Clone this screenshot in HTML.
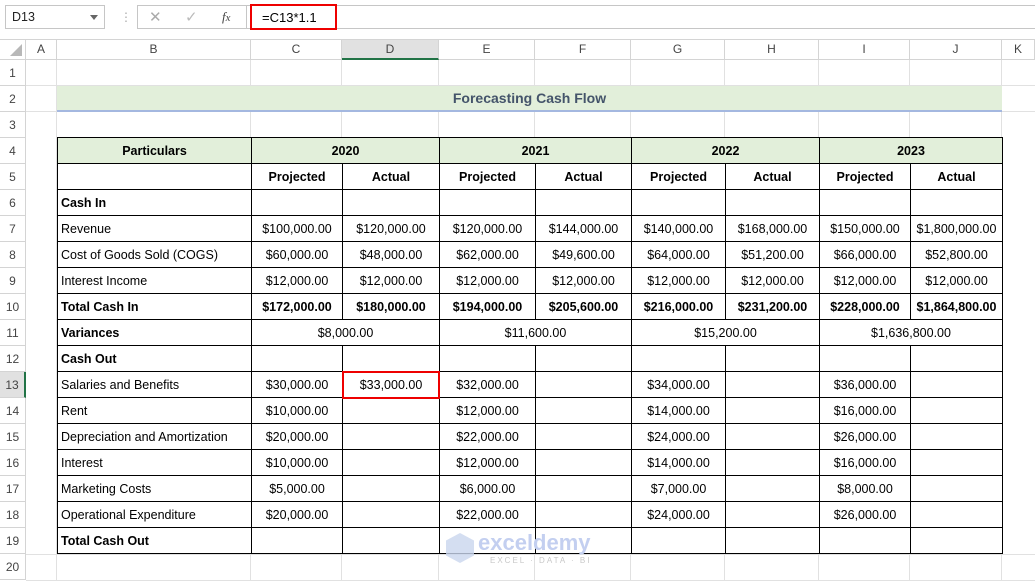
<!DOCTYPE html>
<html><head><meta charset="utf-8"><style>
*{margin:0;padding:0;box-sizing:border-box}
body{width:1035px;height:581px;overflow:hidden;background:#fff;font-family:"Liberation Sans",Arial,sans-serif;position:relative}
.abs{position:absolute}
.top{left:0;top:0;width:1035px;height:40px;background:#fff;border-bottom:1px solid #d4d4d4}
.nb{left:5px;top:5px;width:100px;height:24px;border:1px solid #c6c6c6;font-size:12.5px;color:#222;padding:4px 6px}
.fx{left:137px;top:5px;width:110px;height:24px;border:1px solid #c6c6c6}
.fi{left:247px;top:5px;width:790px;height:24px;border:1px solid #c6c6c6;border-left:none}
.hdr{top:40px;height:20px;background:#fff;border-right:1px solid #d4d4d4;border-bottom:1px solid #d4d4d4;font-size:12px;color:#444;text-align:center;line-height:19px}
.rh{left:0;width:26px;height:26px;border-bottom:1px solid #d4d4d4;border-right:1px solid #d4d4d4;font-size:12px;color:#444;text-align:center;line-height:26px;background:#fff}
.vl{top:60px;width:1px;height:521px;background:#e1e1e1}
.hl{left:26px;width:1009px;height:1px;background:#e1e1e1}
table{position:absolute;left:57px;top:137px;border-collapse:collapse;table-layout:fixed;font-size:12.5px;color:#000;background:#fff}
td{border:1px solid #000;height:26px;text-align:center;white-space:nowrap;overflow:hidden;padding:0}
td.l{text-align:left;padding-left:3px}
.b{font-weight:bold}
.g{background:#e2efda}
</style></head><body>
<div class="abs top"></div>
<div class="abs nb">D13<span style="position:absolute;right:6px;top:9px;border:4px solid transparent;border-top:5px solid #666"></span></div>
<div class="abs" style="left:120px;top:10px;color:#aaa;font-size:12px">⋮</div>
<div class="abs fx"><span style="position:absolute;left:11px;top:2px;color:#aaa;font-size:15px">✕</span><span style="position:absolute;left:47px;top:2px;color:#bbb;font-size:15px">✓</span><span style="position:absolute;left:84px;top:3px;color:#444;font-size:13px;font-style:italic;font-family:'Liberation Serif',serif">f<small>x</small></span></div>
<div class="abs fi"></div>
<div class="abs" style="left:250px;top:4px;width:87px;height:26px;border:2px solid #e00;font-size:13px;padding:4px 10px;color:#000">=C13*1.1</div>

<div class="abs hdr" style="left:0;width:26px"><span style="position:absolute;right:3px;bottom:3px;border:6px solid transparent;border-right-color:#b8b8b8;border-bottom-color:#b8b8b8"></span></div>
<div class="abs hdr" style="left:26px;width:31px">A</div>
<div class="abs hdr" style="left:57px;width:194px">B</div>
<div class="abs hdr" style="left:251px;width:91px">C</div>
<div class="abs hdr" style="left:342px;width:97px;background:#e1e1e1;border-bottom:2px solid #217346">D</div>
<div class="abs hdr" style="left:439px;width:96px">E</div>
<div class="abs hdr" style="left:535px;width:96px">F</div>
<div class="abs hdr" style="left:631px;width:94px">G</div>
<div class="abs hdr" style="left:725px;width:94px">H</div>
<div class="abs hdr" style="left:819px;width:91px">I</div>
<div class="abs hdr" style="left:910px;width:92px">J</div>
<div class="abs hdr" style="left:1002px;width:33px">K</div>

<div class="abs vl" style="left:56px"></div><div class="abs vl" style="left:250px"></div><div class="abs vl" style="left:341px"></div><div class="abs vl" style="left:438px"></div><div class="abs vl" style="left:534px"></div><div class="abs vl" style="left:630px"></div><div class="abs vl" style="left:724px"></div><div class="abs vl" style="left:818px"></div><div class="abs vl" style="left:909px"></div><div class="abs vl" style="left:1001px"></div>
<div class="abs hl" style="top:85px"></div><div class="abs hl" style="top:111px"></div><div class="abs hl" style="top:554px"></div><div class="abs hl" style="top:580px"></div>

<div class="abs rh" style="top:60px">1</div><div class="abs rh" style="top:86px">2</div><div class="abs rh" style="top:112px">3</div><div class="abs rh" style="top:138px">4</div><div class="abs rh" style="top:164px">5</div><div class="abs rh" style="top:190px">6</div><div class="abs rh" style="top:216px">7</div><div class="abs rh" style="top:242px">8</div><div class="abs rh" style="top:268px">9</div><div class="abs rh" style="top:294px">10</div><div class="abs rh" style="top:320px">11</div><div class="abs rh" style="top:346px">12</div><div class="abs rh" style="top:372px;background:#e1e1e1;border-right:2px solid #217346">13</div><div class="abs rh" style="top:398px">14</div><div class="abs rh" style="top:424px">15</div><div class="abs rh" style="top:450px">16</div><div class="abs rh" style="top:476px">17</div><div class="abs rh" style="top:502px">18</div><div class="abs rh" style="top:528px">19</div><div class="abs rh" style="top:554px">20</div>

<div class="abs" style="left:57px;top:86px;width:945px;height:26px;background:#e2efda;border-bottom:2px solid #a4b8e0;text-align:center;font-weight:bold;font-size:14px;color:#44546a;line-height:24px">Forecasting Cash Flow</div>

<table>
<colgroup><col style="width:194px"><col style="width:91px"><col style="width:97px"><col style="width:96px"><col style="width:96px"><col style="width:94px"><col style="width:94px"><col style="width:91px"><col style="width:92px"></colgroup>
<tr class="b g"><td>Particulars</td><td colspan="2">2020</td><td colspan="2">2021</td><td colspan="2">2022</td><td colspan="2">2023</td></tr>
<tr class="b"><td></td><td>Projected</td><td>Actual</td><td>Projected</td><td>Actual</td><td>Projected</td><td>Actual</td><td>Projected</td><td>Actual</td></tr>
<tr><td class="l b">Cash In</td><td></td><td></td><td></td><td></td><td></td><td></td><td></td><td></td></tr>
<tr><td class="l">Revenue</td><td>$100,000.00</td><td>$120,000.00</td><td>$120,000.00</td><td>$144,000.00</td><td>$140,000.00</td><td>$168,000.00</td><td>$150,000.00</td><td>$1,800,000.00</td></tr>
<tr><td class="l">Cost of Goods Sold (COGS)</td><td>$60,000.00</td><td>$48,000.00</td><td>$62,000.00</td><td>$49,600.00</td><td>$64,000.00</td><td>$51,200.00</td><td>$66,000.00</td><td>$52,800.00</td></tr>
<tr><td class="l">Interest Income</td><td>$12,000.00</td><td>$12,000.00</td><td>$12,000.00</td><td>$12,000.00</td><td>$12,000.00</td><td>$12,000.00</td><td>$12,000.00</td><td>$12,000.00</td></tr>
<tr class="b"><td class="l">Total Cash In</td><td>$172,000.00</td><td>$180,000.00</td><td>$194,000.00</td><td>$205,600.00</td><td>$216,000.00</td><td>$231,200.00</td><td>$228,000.00</td><td>$1,864,800.00</td></tr>
<tr><td class="l b">Variances</td><td colspan="2">$8,000.00</td><td colspan="2">$11,600.00</td><td colspan="2">$15,200.00</td><td colspan="2">$1,636,800.00</td></tr>
<tr><td class="l b">Cash Out</td><td></td><td></td><td></td><td></td><td></td><td></td><td></td><td></td></tr>
<tr><td class="l">Salaries and Benefits</td><td>$30,000.00</td><td>$33,000.00</td><td>$32,000.00</td><td></td><td>$34,000.00</td><td></td><td>$36,000.00</td><td></td></tr>
<tr><td class="l">Rent</td><td>$10,000.00</td><td></td><td>$12,000.00</td><td></td><td>$14,000.00</td><td></td><td>$16,000.00</td><td></td></tr>
<tr><td class="l">Depreciation and Amortization</td><td>$20,000.00</td><td></td><td>$22,000.00</td><td></td><td>$24,000.00</td><td></td><td>$26,000.00</td><td></td></tr>
<tr><td class="l">Interest</td><td>$10,000.00</td><td></td><td>$12,000.00</td><td></td><td>$14,000.00</td><td></td><td>$16,000.00</td><td></td></tr>
<tr><td class="l">Marketing Costs</td><td>$5,000.00</td><td></td><td>$6,000.00</td><td></td><td>$7,000.00</td><td></td><td>$8,000.00</td><td></td></tr>
<tr><td class="l">Operational Expenditure</td><td>$20,000.00</td><td></td><td>$22,000.00</td><td></td><td>$24,000.00</td><td></td><td>$26,000.00</td><td></td></tr>
<tr><td class="l b">Total Cash Out</td><td></td><td></td><td></td><td></td><td></td><td></td><td></td><td></td></tr>
</table>
<div class="abs" style="left:342px;top:371px;width:98px;height:28px;border:2px solid #e00"></div>

<div class="abs" style="left:446px;top:533px;width:28px;height:30px;background:#c9d6ee;opacity:.8;clip-path:polygon(50% 0,100% 25%,100% 75%,50% 100%,0 75%,0 25%)"></div>
<div class="abs" style="left:478px;top:530px;font-size:22px;font-weight:bold;color:#c3cff0;letter-spacing:0">exceldemy</div>
<div class="abs" style="left:490px;top:556px;font-size:8px;color:#c8c8c8;letter-spacing:2px">EXCEL · DATA · BI</div>
</body></html>
